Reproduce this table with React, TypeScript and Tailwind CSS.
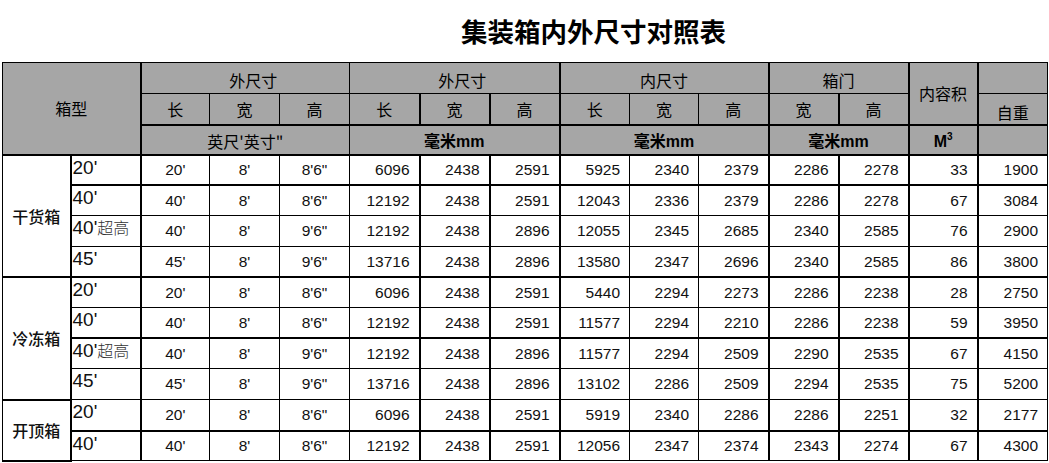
import React from "react";

const CJK = "font-['Noto_Sans_CJK_SC',sans-serif]";
const NUM = "font-['Liberation_Sans','Noto_Sans_CJK_SC',sans-serif]";

// left edges that are drawn heavier in the original sheet
const thickLeft = new Set([1, 2, 6, 7, 8, 11, 12, 13, 14]);

type Row = string[];

const groups: { name: string; rows: Row[] }[] = [
  {
    name: "干货箱",
    rows: [
      ["20'", "20'", "8'", "8'6\"", "6096", "2438", "2591", "5925", "2340", "2379", "2286", "2278", "33", "1900"],
      ["40'", "40'", "8'", "8'6\"", "12192", "2438", "2591", "12043", "2336", "2379", "2286", "2278", "67", "3084"],
      ["40'超高", "40'", "8'", "9'6\"", "12192", "2438", "2896", "12055", "2345", "2685", "2340", "2585", "76", "2900"],
      ["45'", "45'", "8'", "9'6\"", "13716", "2438", "2896", "13580", "2347", "2696", "2340", "2585", "86", "3800"],
    ],
  },
  {
    name: "冷冻箱",
    rows: [
      ["20'", "20'", "8'", "8'6\"", "6096", "2438", "2591", "5440", "2294", "2273", "2286", "2238", "28", "2750"],
      ["40'", "40'", "8'", "8'6\"", "12192", "2438", "2591", "11577", "2294", "2210", "2286", "2238", "59", "3950"],
      ["40'超高", "40'", "8'", "9'6\"", "12192", "2438", "2896", "11577", "2294", "2509", "2290", "2535", "67", "4150"],
      ["45'", "45'", "8'", "9'6\"", "13716", "2438", "2896", "13102", "2286", "2509", "2294", "2535", "75", "5200"],
    ],
  },
  {
    name: "开顶箱",
    rows: [
      ["20'", "20'", "8'", "8'6\"", "6096", "2438", "2591", "5919", "2340", "2286", "2286", "2251", "32", "2177"],
      ["40'", "40'", "8'", "8'6\"", "12192", "2438", "2591", "12056", "2347", "2374", "2343", "2274", "67", "4300"],
    ],
  },
];

const rowHeights = [30, 31, 31, 30, 31, 30, 31, 31, 31, 30];
const thickBottom = new Set([0, 3, 5, 8]);

function SizeLabel({ text }: { text: string }) {
  if (text.endsWith("超高")) {
    return (
      <>
        <span>40'</span>
        <span className={`${CJK} text-[16px] font-light text-[#333]`}>超高</span>
      </>
    );
  }
  return <span>{text}</span>;
}

function MM() {
  return (
    <span className="font-bold">
      毫米<span className={NUM}>mm</span>
    </span>
  );
}

export default function App() {
  const th = `border border-black bg-[#a6a6a6] p-0 text-[16px] font-normal leading-none text-black ${CJK}`;
  let rowIdx = 0;

  return (
    <div className="w-[1049px] h-[463px] overflow-hidden bg-white">
      <div className={`h-[62px] pl-[461px] pt-[16px] text-[26.5px] leading-[30px] font-bold text-black ${CJK}`}>
        集装箱内外尺寸对照表
      </div>

      <table className="ml-[2px] w-[1045px] table-fixed border-collapse">
        <colgroup>
          <col className="w-[68px]" />
          <col className="w-[70px]" />
          <col className="w-[69px]" />
          <col className="w-[70px]" />
          <col className="w-[70px]" />
          <col className="w-[70px]" />
          <col className="w-[70px]" />
          <col className="w-[70px]" />
          <col className="w-[70px]" />
          <col className="w-[69px]" />
          <col className="w-[70px]" />
          <col className="w-[70px]" />
          <col className="w-[70px]" />
          <col className="w-[69px]" />
          <col className="w-[70px]" />
        </colgroup>
        <thead>
          <tr className="h-[31px]">
            <th colSpan={2} rowSpan={3} className={`${th} border-b-2`}>
              箱型
            </th>
            <th colSpan={3} className={`${th} border-l-2 pl-4 pt-[3px]`}>
              外尺寸
            </th>
            <th colSpan={3} className={`${th} pl-4 pt-[3px]`}>
              外尺寸
            </th>
            <th colSpan={3} className={`${th} border-l-2 pt-[3px]`}>
              内尺寸
            </th>
            <th colSpan={2} className={`${th} border-l-2 pt-[3px]`}>
              箱门
            </th>
            <th rowSpan={2} className={`${th} border-l-2 border-b-2`}>
              内容积
            </th>
            <th className={`${th} border-l-2`}></th>
          </tr>
          <tr className="h-[31px]">
            <th className={`${th} border-l-2 border-b-2`}>长</th>
            <th className={`${th} border-b-2`}>宽</th>
            <th className={`${th} border-b-2`}>高</th>
            <th className={`${th} border-b-2`}>长</th>
            <th className={`${th} border-l-2 border-b-2`}>宽</th>
            <th className={`${th} border-l-2 border-b-2`}>高</th>
            <th className={`${th} border-l-2 border-b-2`}>长</th>
            <th className={`${th} border-b-2`}>宽</th>
            <th className={`${th} border-b-2`}>高</th>
            <th className={`${th} border-l-2 border-b-2`}>宽</th>
            <th className={`${th} border-l-2 border-b-2`}>高</th>
            <th className={`${th} border-l-2 border-b-2 pt-[6px]`}>自重</th>
          </tr>
          <tr className="h-[30px]">
            <th colSpan={3} className={`${th} border-l-2 border-b-2 pt-[2px]`}>
              英尺'英寸"
            </th>
            <th colSpan={3} className={`${th} border-b-2 pt-[2px]`}>
              <MM />
            </th>
            <th colSpan={3} className={`${th} border-l-2 border-b-2 pt-[2px]`}>
              <MM />
            </th>
            <th colSpan={2} className={`${th} border-l-2 border-b-2 pt-[2px]`}>
              <MM />
            </th>
            <th className={`${th} border-l-2 border-b-2 pt-[2px]`}>
              <span className={`font-bold ${NUM}`}>
                M<span className="relative -top-[7px] text-[10px] leading-none">3</span>
              </span>
            </th>
            <th className={`${th} border-l-2 border-b-2`}></th>
          </tr>
        </thead>
        <tbody>
          {groups.map((g) =>
            g.rows.map((r, i) => {
              const idx = rowIdx++;
              const h = rowHeights[idx] === 31 ? "h-[31px]" : "h-[30px]";
              const bb = thickBottom.has(idx) ? "border-b-2" : "";
              return (
                <tr key={g.name + i} className={h}>
                  {i === 0 && (
                    <td
                      rowSpan={g.rows.length}
                      className={`border border-black border-b-2 p-0 text-center text-[16px] leading-none font-medium text-[#111] ${CJK}`}
                    >
                      {g.name}
                    </td>
                  )}
                  {r.map((v, c) => {
                    const col = c + 1;
                    const bl = thickLeft.has(col) ? "border-l-2" : "";
                    if (col === 1) {
                      return (
                        <td
                          key={c}
                          className={`border border-black ${bl} ${bb} p-0 pl-[1px] pt-[2px] align-top text-[19px] leading-none text-[#111] ${NUM}`}
                        >
                          <SizeLabel text={v} />
                        </td>
                      );
                    }
                    const align = col <= 4 ? "text-center" : "text-right pr-[9px]";
                    return (
                      <td
                        key={c}
                        className={`border border-black ${bl} ${bb} p-0 ${align} text-[15.5px] leading-none text-[#111] ${NUM}`}
                      >
                        {v}
                      </td>
                    );
                  })}
                </tr>
              );
            })
          )}
        </tbody>
      </table>
    </div>
  );
}
